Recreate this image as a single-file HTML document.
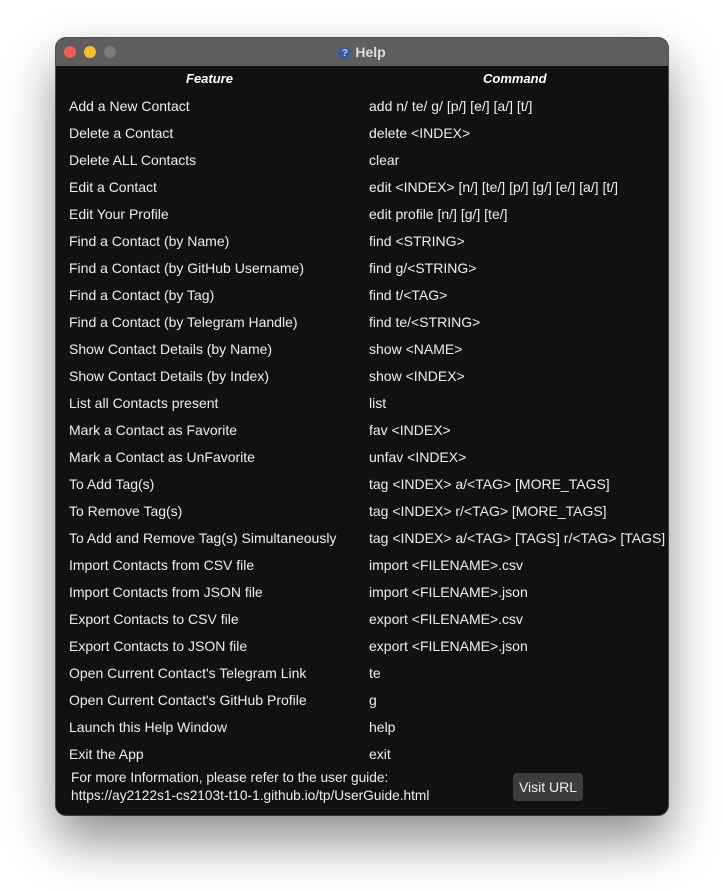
<!DOCTYPE html>
<html><head><style>
body{margin:0;width:724px;height:890px;background:#fff;position:relative;overflow:hidden;font-family:"Liberation Sans",sans-serif;}
.win{position:absolute;left:56px;top:38px;width:612px;height:777px;background:#111;border-radius:10px;overflow:hidden;box-shadow:0 25px 50px rgba(0,0,0,0.45),0 0 0 1px #555;}
.tb{height:28px;background:#5e5e5e;position:relative;}
.dot{position:absolute;top:8px;width:12px;height:12px;border-radius:50%;}
.title{position:absolute;left:0;right:0;top:6px;text-align:center;color:#ddd;font-weight:bold;font-size:14px;}
.q{display:inline-block;width:13px;height:13px;border-radius:50%;background:#3a5a9a;color:#bcd;font-size:10px;line-height:13px;text-align:center;vertical-align:1px;margin-right:4px;}
.row{position:absolute;left:13px;color:#eee;font-size:14px;white-space:nowrap;}
.row span{position:absolute;left:300px;}
.hd{position:absolute;top:33px;color:#fff;font-weight:bold;font-style:italic;font-size:13px;}
.ft{position:absolute;left:15px;color:#eee;font-size:13.7px;}
.btn{position:absolute;left:457px;top:735px;width:70px;height:28px;background:#3c3c3c;border-radius:4px;color:#eee;font-size:14px;line-height:28px;text-align:center;}
</style></head><body>
<div class="win">
<div class="tb">
<div class="dot" style="left:8px;background:#ed5e57"></div>
<div class="dot" style="left:28px;background:#f5bd2f"></div>
<div class="dot" style="left:48px;background:#7c7c7c"></div>
<div class="title"><span class="q">?</span>Help</div>
</div>
<div class="hd" style="left:130px">Feature</div>
<div class="hd" style="left:427px">Command</div>
<div class="row" style="top:60px">Add a New Contact<span>add n/ te/ g/ [p/] [e/] [a/] [t/]</span></div>
<div class="row" style="top:87px">Delete a Contact<span>delete &lt;INDEX&gt;</span></div>
<div class="row" style="top:114px">Delete ALL Contacts<span>clear</span></div>
<div class="row" style="top:141px">Edit a Contact<span>edit &lt;INDEX&gt; [n/] [te/] [p/] [g/] [e/] [a/] [t/]</span></div>
<div class="row" style="top:168px">Edit Your Profile<span>edit profile [n/] [g/] [te/]</span></div>
<div class="row" style="top:195px">Find a Contact (by Name)<span>find &lt;STRING&gt;</span></div>
<div class="row" style="top:222px">Find a Contact (by GitHub Username)<span>find g/&lt;STRING&gt;</span></div>
<div class="row" style="top:249px">Find a Contact (by Tag)<span>find t/&lt;TAG&gt;</span></div>
<div class="row" style="top:276px">Find a Contact (by Telegram Handle)<span>find te/&lt;STRING&gt;</span></div>
<div class="row" style="top:303px">Show Contact Details (by Name)<span>show &lt;NAME&gt;</span></div>
<div class="row" style="top:330px">Show Contact Details (by Index)<span>show &lt;INDEX&gt;</span></div>
<div class="row" style="top:357px">List all Contacts present<span>list</span></div>
<div class="row" style="top:384px">Mark a Contact as Favorite<span>fav &lt;INDEX&gt;</span></div>
<div class="row" style="top:411px">Mark a Contact as UnFavorite<span>unfav &lt;INDEX&gt;</span></div>
<div class="row" style="top:438px">To Add Tag(s)<span>tag &lt;INDEX&gt; a/&lt;TAG&gt; [MORE_TAGS]</span></div>
<div class="row" style="top:465px">To Remove Tag(s)<span>tag &lt;INDEX&gt; r/&lt;TAG&gt; [MORE_TAGS]</span></div>
<div class="row" style="top:492px">To Add and Remove Tag(s) Simultaneously<span>tag &lt;INDEX&gt; a/&lt;TAG&gt; [TAGS] r/&lt;TAG&gt; [TAGS]</span></div>
<div class="row" style="top:519px">Import Contacts from CSV file<span>import &lt;FILENAME&gt;.csv</span></div>
<div class="row" style="top:546px">Import Contacts from JSON file<span>import &lt;FILENAME&gt;.json</span></div>
<div class="row" style="top:573px">Export Contacts to CSV file<span>export &lt;FILENAME&gt;.csv</span></div>
<div class="row" style="top:600px">Export Contacts to JSON file<span>export &lt;FILENAME&gt;.json</span></div>
<div class="row" style="top:627px">Open Current Contact's Telegram Link<span>te</span></div>
<div class="row" style="top:654px">Open Current Contact's GitHub Profile<span>g</span></div>
<div class="row" style="top:681px">Launch this Help Window<span>help</span></div>
<div class="row" style="top:708px">Exit the App<span>exit</span></div>
<div class="ft" style="top:732px">For more Information, please refer to the user guide:</div>
<div class="ft" style="top:750px">https://ay2122s1-cs2103t-t10-1.github.io/tp/UserGuide.html</div>
<div class="btn">Visit URL</div>
</div>
</body></html>
